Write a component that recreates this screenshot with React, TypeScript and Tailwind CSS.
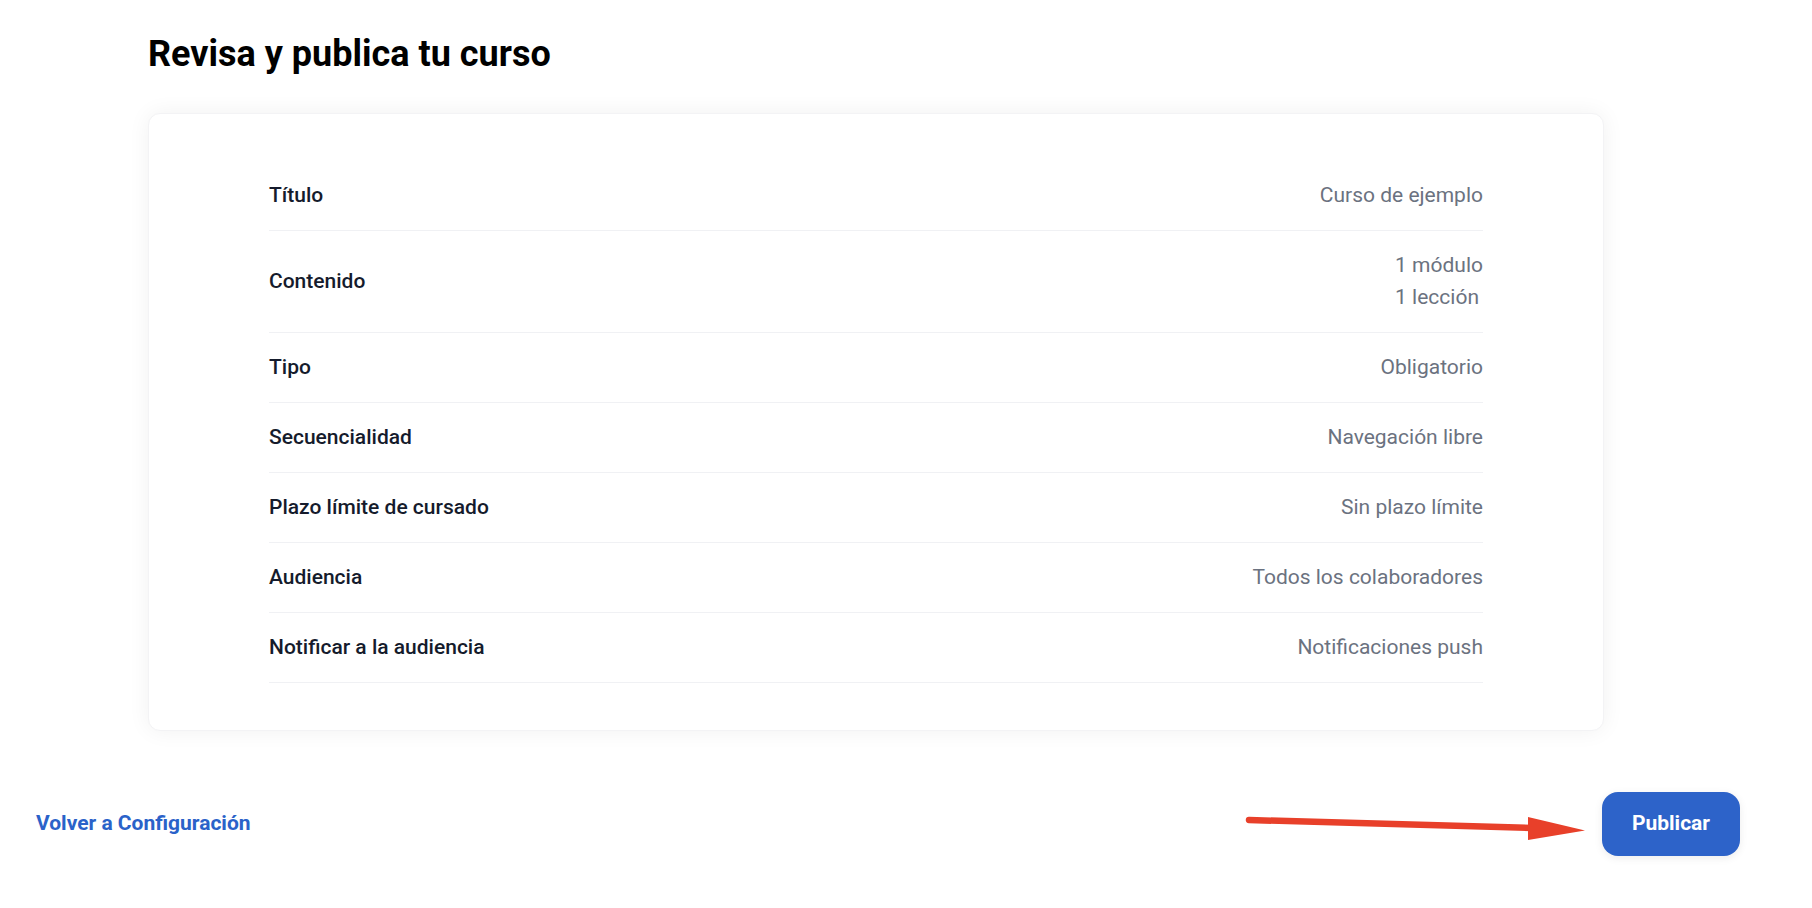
import React from "react";

const rows: { label: string; values: string[] }[] = [
  { label: "Título", values: ["Curso de ejemplo"] },
  { label: "Contenido", values: ["1 módulo", "1 lección"] },
  { label: "Tipo", values: ["Obligatorio"] },
  { label: "Secuencialidad", values: ["Navegación libre"] },
  { label: "Plazo límite de cursado", values: ["Sin plazo límite"] },
  { label: "Audiencia", values: ["Todos los colaboradores"] },
  { label: "Notificar a la audiencia", values: ["Notificaciones push"] },
];

export default function App() {
  return (
    <div
      className="relative min-h-screen w-full bg-white"
      style={{ fontFamily: "Roboto, 'Noto Sans', Arial, sans-serif" }}
    >
      <div className="pl-[148px] pt-[34px] w-[1604px]">
        <h1 className="text-[36px] leading-[40px] font-bold text-black">Revisa y publica tu curso</h1>
        <div className="mt-[39px] rounded-[12px] bg-white border border-[#f3f3f5] shadow-[0_0_22px_rgba(0,0,0,0.06)] px-[120px] py-[47px]">
          {rows.map((r) => (
            <div
              key={r.label}
              className="flex items-center justify-between border-b border-[#f0f1f4] pt-[18px] pb-[19px]"
            >
              <div className="text-[21px] leading-[32px] font-medium text-[#151b2c]">{r.label}</div>
              <div className="flex flex-col items-start">
                {r.values.map((v) => (
                  <div key={v} className="text-[21px] leading-[32px] text-[#6b7280]">
                    {v}
                  </div>
                ))}
              </div>
            </div>
          ))}
        </div>
      </div>

      <div className="mt-[61px] flex items-center justify-between pl-[36px] pr-[72px]">
        <a className="text-[21px] font-bold text-[#2a62c9] cursor-pointer">Volver a Configuración</a>
        <button className="h-[64px] w-[138px] rounded-[16px] bg-[#2d63c9] text-white text-[21px] font-bold shadow-[0_2px_8px_rgba(0,0,0,0.08)]">
          Publicar
        </button>
      </div>

      <svg
        className="pointer-events-none absolute left-0 top-0"
        width="1812"
        height="908"
        viewBox="0 0 1812 908"
      >
        <line x1="1249" y1="820" x2="1532" y2="828" stroke="#e8402a" strokeWidth="6.5" strokeLinecap="round" />
        <polygon points="1528,817 1585,830.5 1528,840" fill="#e8402a" />
      </svg>
    </div>
  );
}
